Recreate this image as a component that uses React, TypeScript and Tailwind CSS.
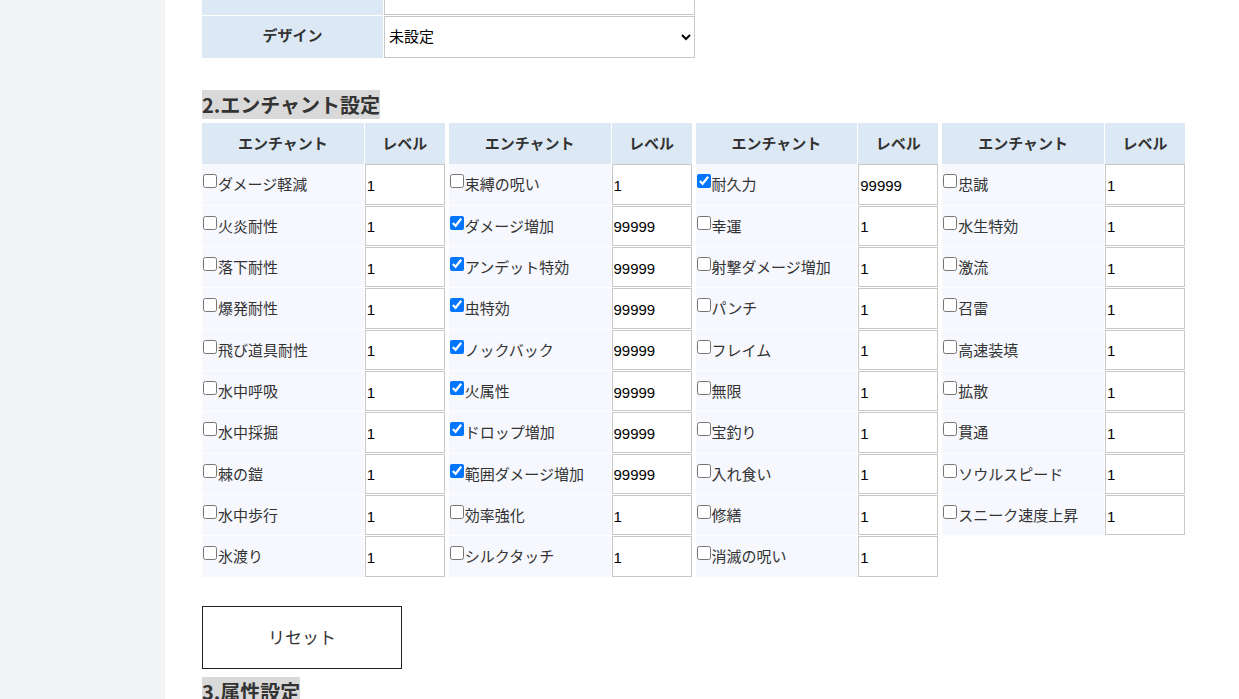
import React from 'react'

type Enchant = { name: string; checked?: boolean }

const tables: Enchant[][] = [
  [
    { name: 'ダメージ軽減' },
    { name: '火炎耐性' },
    { name: '落下耐性' },
    { name: '爆発耐性' },
    { name: '飛び道具耐性' },
    { name: '水中呼吸' },
    { name: '水中採掘' },
    { name: '棘の鎧' },
    { name: '水中歩行' },
    { name: '氷渡り' },
  ],
  [
    { name: '束縛の呪い' },
    { name: 'ダメージ増加', checked: true },
    { name: 'アンデット特効', checked: true },
    { name: '虫特効', checked: true },
    { name: 'ノックバック', checked: true },
    { name: '火属性', checked: true },
    { name: 'ドロップ増加', checked: true },
    { name: '範囲ダメージ増加', checked: true },
    { name: '効率強化' },
    { name: 'シルクタッチ' },
  ],
  [
    { name: '耐久力', checked: true },
    { name: '幸運' },
    { name: '射撃ダメージ増加' },
    { name: 'パンチ' },
    { name: 'フレイム' },
    { name: '無限' },
    { name: '宝釣り' },
    { name: '入れ食い' },
    { name: '修繕' },
    { name: '消滅の呪い' },
  ],
  [
    { name: '忠誠' },
    { name: '水生特効' },
    { name: '激流' },
    { name: '召雷' },
    { name: '高速装填' },
    { name: '拡散' },
    { name: '貫通' },
    { name: 'ソウルスピード' },
    { name: 'スニーク速度上昇' },
  ],
]

const jp = "font-['Noto_Sans_CJK_JP','Noto_Sans',sans-serif]"

function EnchantTable({ rows }: { rows: Enchant[] }) {
  return (
    <div className="grid grid-cols-[1fr_80px] gap-x-px gap-y-px auto-rows-[40.33px] content-start">
      <div className="h-[41px] bg-[#dce9f5] flex items-center justify-center text-[15px] font-bold text-[#333]">
        エンチャント
      </div>
      <div className="h-[41px] bg-[#dce9f5] flex items-center justify-center text-[15px] font-bold text-[#333]">
        レベル
      </div>
      {rows.map((r) => (
        <React.Fragment key={r.name}>
          <label className="bg-[#f6f8fe] flex items-center text-[15px] text-[#333] pl-px">
            <input type="checkbox" defaultChecked={r.checked} className="m-0 mb-[6px] w-[14px] h-[14px]" />
            <span className="ml-px">{r.name}</span>
          </label>
          <input
            type="text"
            defaultValue={r.checked ? '99999' : '1'}
            className="w-full h-full border border-[#c8c8c8] bg-white px-px pt-[2px] text-[15px] text-black font-['Liberation_Sans',Arial,sans-serif] outline-none"
          />
        </React.Fragment>
      ))}
    </div>
  )
}

export default function App() {
  return (
    <div className={`flex min-h-[699px] bg-white ${jp}`}>
      <aside className="w-[165px] shrink-0 bg-[#f3f4f6]" />
      <main className="flex-1 pl-[37px]">
        <div className="grid grid-cols-[181px_311px] gap-px w-[493px]">
          <div className="h-[15px] bg-[#dce9f5]" />
          <div className="h-[15px] border-x border-b border-[#c8c8c8] bg-white" />
          <div className="h-[42px] pb-[3px] bg-[#dce9f5] flex items-center justify-center text-[15px] font-bold text-[#333]">
            デザイン
          </div>
          <select
            defaultValue="none"
            className="h-[42px] w-full border border-[#c8c8c8] bg-white pl-0 pb-[3px] text-[15px] text-black"
          >
            <option value="none">未設定</option>
          </select>
        </div>

        <h2 className="mt-[32px] inline-block bg-[#d9d9d9] text-[20px] leading-[29px] font-bold text-[#333]">
          2.エンチャント設定
        </h2>

        <div className="mt-[4px] grid grid-cols-4 gap-[4px] w-[983px]">
          {tables.map((t, i) => (
            <EnchantTable key={i} rows={t} />
          ))}
        </div>

        <button className="mt-[29px] block w-[200px] h-[63px] border border-[#222] bg-white text-[17px] text-[#333]">
          リセット
        </button>

        <h2 className="mt-[8px] inline-block bg-[#d9d9d9] text-[20px] leading-[29px] font-bold text-[#333]">
          3.属性設定
        </h2>
      </main>
    </div>
  )
}
